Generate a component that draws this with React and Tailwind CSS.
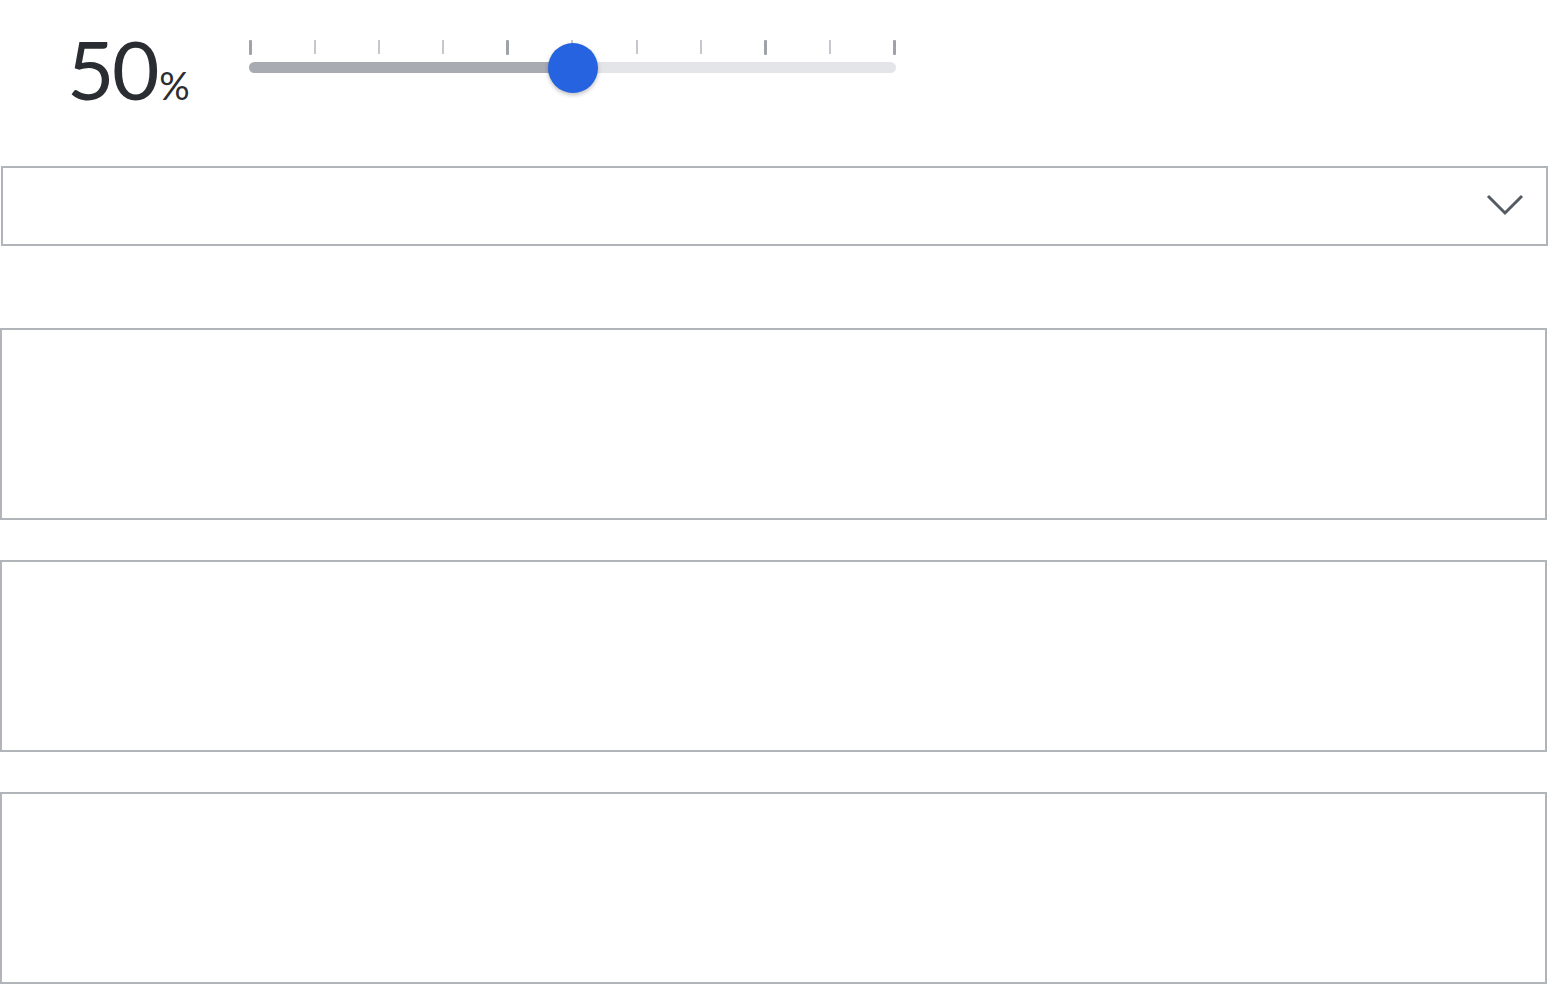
import React from "react";

const ticks = [1, 0, 0, 0, 1, 0, 0, 0, 1, 0, 1];

export default function App() {
  return (
    <div className="w-[1548px] h-[984px] bg-white overflow-hidden" style={{ fontFamily: "Lato, 'Noto Sans', sans-serif" }}>
      <div className="flex items-start h-[166px]">
        <div className="w-[249px] shrink-0 pl-[67px] pt-[27px] flex items-baseline text-[#2a2d31]">
          <span className="text-[82px] leading-none tracking-[-2.5px]">50</span>
          <span className="text-[38px] leading-none ml-[2px]">%</span>
        </div>
        <div className="mt-[40px] w-[647px] relative">
          <div className="flex justify-between items-start h-[15px]">
            {ticks.map((t, i) => (
              <div
                key={i}
                className={t ? "w-[3px] h-[15px] bg-[#9fa3a9] rounded-[1px]" : "w-[2px] h-[14px] bg-[#c4c7cb]"}
              />
            ))}
          </div>
          <div className="mt-[7px] h-[11px] rounded-full bg-[#e3e5e8] relative">
            <div className="absolute left-0 top-0 h-full w-1/2 rounded-full bg-[#a8acb2]" />
            <div className="absolute left-1/2 top-1/2 -translate-x-1/2 -translate-y-1/2 w-[50px] h-[50px] rounded-full bg-[#2563e0] shadow-[0_2px_4px_rgba(0,0,0,0.25)]" />
          </div>
        </div>
      </div>
      <div className="ml-[1px] h-[80px] border-2 border-[#b1b5ba] flex items-center justify-end pr-[22px] pb-[3px]">
        <svg width="38" height="22" viewBox="0 0 38 22" fill="none">
          <path d="M2 2 L19 19 L36 2" stroke="#555b63" strokeWidth="3" />
        </svg>
      </div>
      <div className="mt-[82px] flex flex-col gap-[40px] w-[1547px]">
        <div className="h-[192px] border-2 border-[#b1b5ba]" />
        <div className="h-[192px] border-2 border-[#b1b5ba]" />
        <div className="h-[192px] border-2 border-[#b1b5ba]" />
      </div>
    </div>
  );
}
